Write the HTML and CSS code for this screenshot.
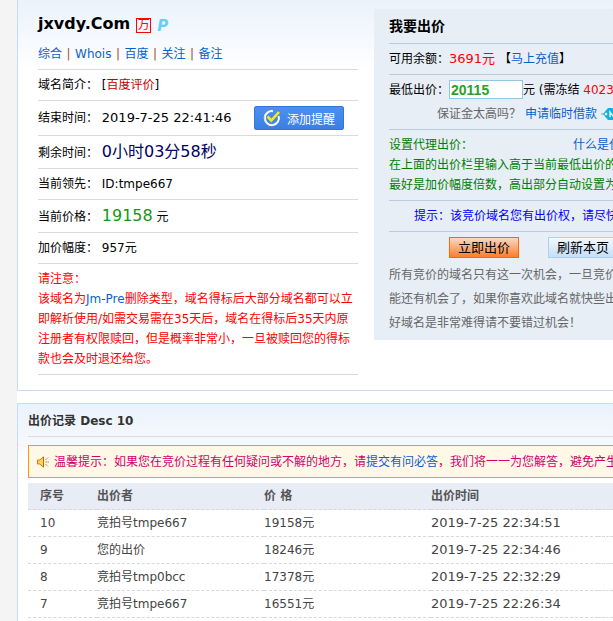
FILE: index.html
```html
<!DOCTYPE html>
<html lang="zh-CN">
<head>
<meta charset="utf-8">
<title>jxvdy.Com</title>
<link rel="stylesheet" href="styles.css">
</head>
<body>
<main class="page">
  <section class="panel auction">
    <div class="info">
      <h1 class="domain">jxvdy.Com <span class="badge-wan">万</span><span class="badge-p">P</span></h1>
      <nav class="row links"><a href="#">综合</a><span>|</span><a href="#">Whois</a><span>|</span><a href="#">百度</a><span>|</span><a href="#">关注</a><span>|</span><a href="#">备注</a></nav>
      <div class="row"><span>域名简介： [<a class="dark-red" href="#">百度评价</a>]</span></div>
      <div class="row tall split"><span>结束时间： <time class="date">2019-7-25 22:41:46</time></span>
        <button class="remind" type="button">
          <svg width="18" height="18" viewBox="0 0 18 18" fill="none" aria-hidden="true">
            <path d="M10 2.2A7 7 0 1 0 15.6 7" stroke="#fff" stroke-width="2"/>
            <path d="M4 2.8A8 8 0 0 0 4 15" stroke="#cfe2ff" stroke-width="1"/>
            <path d="M4.5 7.5 8.3 11.5 16 3" stroke="#f5ea14" stroke-width="2.6"/>
          </svg>添加提醒</button>
      </div>
      <div class="row mid"><span>剩余时间： <span class="big navy">0小时03分58秒</span></span></div>
      <div class="row"><span>当前领先： ID:tmpe667</span></div>
      <div class="row mid"><span>当前价格： <span class="big price">19158</span> 元</span></div>
      <div class="row"><span>加价幅度： 957元</span></div>
      <p class="caution">请注意：<br>该域名为<a href="#">Jm-Pre</a>删除类型，域名得标后大部分域名都可以立<br>即解析使用/如需交易需在35天后，域名在得标后35天内原<br>注册者有权限赎回，但是概率非常小，一旦被赎回您的得标<br>款也会及时退还给您。</p>
    </div>
    <form class="bid">
      <h2 class="bid-title">我要出价</h2>
      <div class="bid-row">可用余额：<span class="red date">3691元</span> 【<a href="#">马上充值</a>】</div>
      <div class="bid-offer">
        <div class="offer-line"><label for="offer">最低出价：</label><input id="offer" class="offer" type="text" value="20115">元 (需冻结 <span class="red">4023</span></div>
        <div class="loan-line">保证金太高吗？ <a href="#">申请临时借款</a>
          <svg width="24" height="14" viewBox="0 0 24 14" aria-hidden="true">
            <path d="M0 7h4" stroke="#999"/>
            <path d="M2 7 7 1h17v12H7z" fill="#0db2e4"/>
            <circle cx="5" cy="7" r="1.3" fill="#fff"/>
            <path d="M9 10V5l3 4 3-4v5" fill="none" stroke="#fff" stroke-width="1.3"/>
          </svg>
        </div>
      </div>
      <div class="proxy">
        <div class="proxy-head"><span>设置代理出价：</span><a href="#">什么是代</a></div>
        <div>在上面的出价栏里输入高于当前最低出价的</div>
        <div>最好是加价幅度倍数，高出部分自动设置为</div>
      </div>
      <div class="bid-row tip">提示：该竞价域名您有出价权，请尽快</div>
      <div class="actions">
        <button class="btn btn-bid" type="button">立即出价</button>
        <button class="btn btn-refresh" type="button">刷新本页</button>
      </div>
      <div class="chance">所有竞价的域名只有这一次机会，一旦竞价<br>能还有机会了，如果你喜欢此域名就快些出<br>好域名是非常难得请不要错过机会！</div>
    </form>
  </section>

  <section class="panel records">
    <h2 class="records-title">出价记录 Desc 10</h2>
    <div class="notice">
      <svg width="12" height="12" viewBox="0 0 12 12" aria-hidden="true">
        <path d="M.5 4h2.300L6.500.8v10.400L2.800 8H.5z" fill="#ffd35c" stroke="#d9780b"/>
        <path d="M6.500 1v10" stroke="#c95d0a"/>
        <path d="M8.500 4 11 1.500M8.500 6H12M8.500 8 11 10.500" stroke="#e07a20" stroke-dasharray="1.500 .5"/>
      </svg>
      <span>温馨提示：如果您在竞价过程有任何疑问或不解的地方，请<a href="#">提交有问必答</a>，我们将一一为您解答，避免产生</span>
    </div>
    <table class="bids">
      <colgroup><col class="c-no"><col class="c-data"><col class="c-data"><col class="c-data"><col></colgroup>
      <thead><tr><th>序号</th><th>出价者</th><th>价 格</th><th>出价时间</th><th></th></tr></thead>
      <tbody>
        <tr><td>10</td><td>竞拍号tmpe667</td><td>19158元</td><td class="date">2019-7-25 22:34:51</td><td></td></tr>
        <tr><td>9</td><td>您的出价</td><td>18246元</td><td class="date">2019-7-25 22:34:46</td><td></td></tr>
        <tr><td>8</td><td>竞拍号tmp0bcc</td><td>17378元</td><td class="date">2019-7-25 22:32:29</td><td></td></tr>
        <tr><td>7</td><td>竞拍号tmpe667</td><td>16551元</td><td class="date">2019-7-25 22:26:34</td><td></td></tr>
      </tbody>
    </table>
  </section>
</main>
</body>
</html>
```
FILE: styles.css
```css
* { box-sizing: border-box; }
body {
  margin: 0;
  background: #f4f4f4;
  color: #000;
  font: 12px/20px "DejaVu Sans", "Noto Sans CJK SC", sans-serif;
  overflow-x: hidden;
}
a { color: #0a5fcb; text-decoration: none; }
h1, h2, p { margin: 0; }
button, input { font-family: inherit; }

.page { margin-left: 17px; background: #fff; overflow: hidden; white-space: nowrap; }
.panel {
  border-left: 1px solid #c6dcf0;
  background: linear-gradient(#eaf2fc, #fff 70px);
}
.auction {
  display: flex;
  align-items: flex-start;
  gap: 16px;
  padding: 0 0 15px 20px;
  border-bottom: 1px solid #c6dcf0;
}

.info { flex: 0 0 320px; padding-top: 10px; }
.domain { display: flex; align-items: center; height: 28px; font-size: 16px; }
.badge-wan {
  width: 15px;
  height: 15px;
  margin: 2px 6px 0;
  border: 1px solid #f00;
  color: #f00;
  font-size: 12px;
  font-weight: normal;
  line-height: 13px;
  text-align: center;
}
.badge-p { padding-top: 3px; color: #6ccdf6; font-size: 15px; font-style: italic; }
.row {
  display: flex;
  align-items: center;
  height: 31px;
  border-bottom: 1px solid #dadada;
}
.row.tall { height: 35px; }
.row.mid { height: 33px; }
.row.links { gap: 4px; height: 32px; padding-top: 1px; color: #a0522d; }
.row.links span { width: 5px; text-align: center; }
.split { justify-content: space-between; padding-right: 14px; }
.date { font-size: 13px; }
.dark-red { color: #c00000; }
.big { font-size: 16px; }
.navy { color: #000066; }
.price { color: #159615; }
.red { color: #f00; }
.remind {
  display: flex;
  align-items: center;
  gap: 6px;
  width: 90px;
  height: 24px;
  padding: 0 8px;
  border: 1px solid #3476d6;
  border-radius: 2px;
  background: linear-gradient(#4b90ef, #3c7fe4);
  color: #fff;
  font-size: 12px;
  white-space: nowrap;
}
.remind svg { flex: none; }
.caution { padding: 5px 0; border-bottom: 1px solid #dadada; color: #f00; }

.bid {
  flex: 1;
  min-width: 0;
  margin-top: 9px;
  padding: 0 0 5px 15px;
  background: #e7eef6;
  overflow: hidden;
}
.bid-title { height: 35px; border-bottom: 1px solid #b8cbdf; font-size: 14px; line-height: 34px; }
.bid-row { height: 31px; border-bottom: 1px solid #b8cbdf; line-height: 30px; }
.bid-offer { height: 55px; padding-top: 5px; border-bottom: 1px solid #b8cbdf; }
.offer-line { display: flex; align-items: flex-start; height: 20px; white-space: pre; }
.offer {
  width: 74px;
  height: 19px;
  padding: 0 1px;
  border: 1px solid #94c6e1;
  background: #fff;
  color: #2ca02c;
  font: bold 14px "Liberation Sans", sans-serif;
}
.loan-line { display: flex; align-items: center; gap: 4px; height: 27px; padding-left: 48px; color: #666; }
.loan-line svg { flex: none; }
.proxy { padding: 5px 0; border-bottom: 1px solid #b8cbdf; color: #008000; }
.proxy-head { display: flex; gap: 100px; }
.tip { padding-left: 25px; color: #00f; }
.actions { display: flex; gap: 29px; padding: 5px 0 5px 60px; }
.btn {
  flex: none;
  height: 21px;
  padding: 0 8px;
  border: 1px solid #ff6600;
  font-size: 13px;
  line-height: 19px;
  color: #000;
}
.btn-bid { background: linear-gradient(#f7d9c6, #ff7d28); }
.btn-refresh { border-color: #a9d0f5; background: linear-gradient(#f3f8fd, #c5dff8); }
.chance { color: #666; line-height: 24px; }

.records { margin-top: 12px; padding: 0 0 6px 10px; border-top: 1px solid #c6dcf0; }
.records-title { height: 33px; border-bottom: 1px solid #dadada; color: #333; font-size: 12px; line-height: 34px; }
.notice {
  display: flex;
  align-items: center;
  gap: 5px;
  height: 33px;
  margin: 8px 0 5px;
  padding-left: 8px;
  border: 1px solid #ff9900;
  border-right: 0;
  background: #fff8e6;
  color: #d0006f;
  overflow: hidden;
}
.notice svg { flex: none; }
.bids { width: 100%; border-spacing: 0; table-layout: fixed; color: #444; }
.c-no { width: 69px; }
.c-data { width: 167px; }
.bids th, .bids td { height: 27px; padding: 0; border-bottom: 1px dashed #d8d8d8; text-align: left; }
.bids th { background: #e7ecf5; color: #555; }
.bids th:first-child, .bids td:first-child { padding-left: 12px; }
```
